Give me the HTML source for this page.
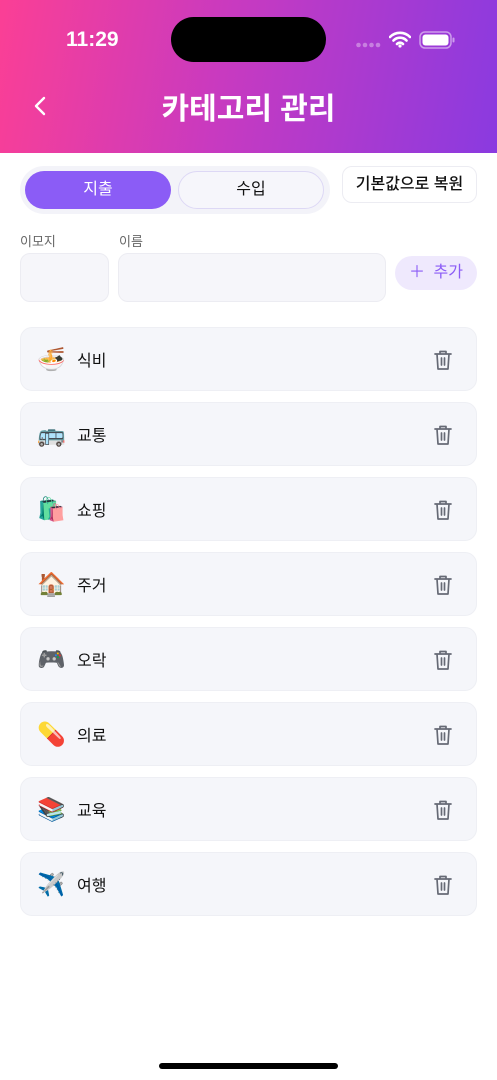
<!DOCTYPE html>
<html><head><meta charset="utf-8"><style>
*{box-sizing:border-box;margin:0;padding:0}
body{width:497px;height:1080px;background:#fff;font-family:"Liberation Sans","Noto Sans CJK KR",sans-serif;position:relative;overflow:hidden;color:#111}
.hdr{position:absolute;left:0;top:0;width:497px;height:153px;background:linear-gradient(100deg,#fb3f95 0%,#c83ac0 45%,#8a3ae0 100%)}
.time{position:absolute;left:66px;top:28px;color:#fff;font-size:21px;font-weight:bold}
.island{position:absolute;left:171px;top:17px;width:155px;height:45px;border-radius:23px;background:#000}
.title{position:absolute;left:0;width:497px;top:84px;text-align:center;color:#fff;font-size:30px;font-weight:bold}
.seg{position:absolute;left:20px;top:166px;width:310px;height:48px;border-radius:24px;background:#f3f3f9}
.s1{position:absolute;left:5px;top:5px;width:146px;height:38px;border-radius:19px;background:#8b5cf6;color:#fff;font-size:16px;text-align:center;line-height:38px}
.s2{position:absolute;left:158px;top:5px;width:146px;height:38px;border-radius:19px;background:#f6f6fb;border:1px solid #ddd8f5;color:#111;font-size:16px;text-align:center;line-height:36px}
.reset{position:absolute;left:342px;top:166px;width:135px;height:37px;border:1px solid #ececf2;border-radius:10px;font-size:16px;text-align:center;line-height:35px;font-weight:500}
.lbl{position:absolute;top:231px;font-size:13px;color:#666}
.inp{position:absolute;top:253px;height:49px;background:#f6f6fa;border:1px solid #ececf2;border-radius:10px}
.add{position:absolute;left:395px;top:256px;width:82px;height:34px;border-radius:17px;background:#efe9fd;color:#8b5cf6;font-size:16px;line-height:34px;text-align:center;word-spacing:4px}
.item{position:absolute;left:20px;width:457px;height:64px;background:#f5f6fa;border:1px solid #eeeff4;border-radius:12px}
.em{position:absolute;left:16px;top:17px;font-size:23px;line-height:28px}
.nm{position:absolute;left:56px;top:19px;font-size:16px}
.tr{position:absolute;left:412px;top:21px}
.home{position:absolute;left:159px;top:1063px;width:179px;height:6px;border-radius:3px;background:#000}
</style></head><body>
<div class="hdr">
<div class="time">11:29</div>
<div class="island"></div>
<svg style="position:absolute;left:356px;top:42px" width="25" height="6"><g fill="#fff" opacity=".35"><circle cx="2.5" cy="3" r="2.3"/><circle cx="9" cy="3" r="2.3"/><circle cx="15.5" cy="3" r="2.3"/><circle cx="22" cy="3" r="2.3"/></g></svg>
<svg style="position:absolute;left:389px;top:31px" width="22" height="17" viewBox="0 0 22 17"><path d="M1 6a14 14 0 0 1 20 0M4.5 9.5a9 9 0 0 1 13 0M8 13a4 4 0 0 1 6 0" stroke="#fff" stroke-width="2.6" fill="none" stroke-linecap="round"/><circle cx="11" cy="15" r="1.6" fill="#fff"/></svg>
<svg style="position:absolute;left:419px;top:31px" width="36" height="18"><rect x="1" y="1" width="31" height="16" rx="5" fill="none" stroke="#fff" stroke-opacity=".5" stroke-width="1.5"/><rect x="3.5" y="3.5" width="26" height="11" rx="3" fill="#fff"/><rect x="33.5" y="6.5" width="2" height="5" rx="1" fill="#fff" opacity=".5"/></svg>
<svg style="position:absolute;left:33px;top:96px" width="14" height="20"><path d="M11 2L3 10l8 8" stroke="#fff" stroke-width="2.4" fill="none" stroke-linecap="round" stroke-linejoin="round"/></svg>
<div class="title">카테고리 관리</div>
</div>
<div class="seg"><div class="s1">지출</div><div class="s2">수입</div></div>
<div class="reset">기본값으로 복원</div>
<div class="lbl" style="left:20px">이모지</div>
<div class="lbl" style="left:119px">이름</div>
<div class="inp" style="left:20px;width:89px"></div>
<div class="inp" style="left:118px;width:268px"></div>
<div class="add">＋ 추가</div>

<div class="item" style="top:327px"><span class="em">🍜</span><span class="nm">식비</span><svg class="tr" width="20" height="22" viewBox="0 0 20 22"><path d="M2 5h16M7 5V2.5h6V5M4 5l1 15h10l1-15M8.5 9v7M11.5 9v7" stroke="#666a75" stroke-width="1.7" fill="none" stroke-linejoin="round" stroke-linecap="round"/></svg></div>
<div class="item" style="top:402px"><span class="em">🚌</span><span class="nm">교통</span><svg class="tr" width="20" height="22" viewBox="0 0 20 22"><path d="M2 5h16M7 5V2.5h6V5M4 5l1 15h10l1-15M8.5 9v7M11.5 9v7" stroke="#666a75" stroke-width="1.7" fill="none" stroke-linejoin="round" stroke-linecap="round"/></svg></div>
<div class="item" style="top:477px"><span class="em">🛍️</span><span class="nm">쇼핑</span><svg class="tr" width="20" height="22" viewBox="0 0 20 22"><path d="M2 5h16M7 5V2.5h6V5M4 5l1 15h10l1-15M8.5 9v7M11.5 9v7" stroke="#666a75" stroke-width="1.7" fill="none" stroke-linejoin="round" stroke-linecap="round"/></svg></div>
<div class="item" style="top:552px"><span class="em">🏠</span><span class="nm">주거</span><svg class="tr" width="20" height="22" viewBox="0 0 20 22"><path d="M2 5h16M7 5V2.5h6V5M4 5l1 15h10l1-15M8.5 9v7M11.5 9v7" stroke="#666a75" stroke-width="1.7" fill="none" stroke-linejoin="round" stroke-linecap="round"/></svg></div>
<div class="item" style="top:627px"><span class="em">🎮</span><span class="nm">오락</span><svg class="tr" width="20" height="22" viewBox="0 0 20 22"><path d="M2 5h16M7 5V2.5h6V5M4 5l1 15h10l1-15M8.5 9v7M11.5 9v7" stroke="#666a75" stroke-width="1.7" fill="none" stroke-linejoin="round" stroke-linecap="round"/></svg></div>
<div class="item" style="top:702px"><span class="em">💊</span><span class="nm">의료</span><svg class="tr" width="20" height="22" viewBox="0 0 20 22"><path d="M2 5h16M7 5V2.5h6V5M4 5l1 15h10l1-15M8.5 9v7M11.5 9v7" stroke="#666a75" stroke-width="1.7" fill="none" stroke-linejoin="round" stroke-linecap="round"/></svg></div>
<div class="item" style="top:777px"><span class="em">📚</span><span class="nm">교육</span><svg class="tr" width="20" height="22" viewBox="0 0 20 22"><path d="M2 5h16M7 5V2.5h6V5M4 5l1 15h10l1-15M8.5 9v7M11.5 9v7" stroke="#666a75" stroke-width="1.7" fill="none" stroke-linejoin="round" stroke-linecap="round"/></svg></div>
<div class="item" style="top:852px"><span class="em">✈️</span><span class="nm">여행</span><svg class="tr" width="20" height="22" viewBox="0 0 20 22"><path d="M2 5h16M7 5V2.5h6V5M4 5l1 15h10l1-15M8.5 9v7M11.5 9v7" stroke="#666a75" stroke-width="1.7" fill="none" stroke-linejoin="round" stroke-linecap="round"/></svg></div>
<div class="home"></div>
</body></html>
